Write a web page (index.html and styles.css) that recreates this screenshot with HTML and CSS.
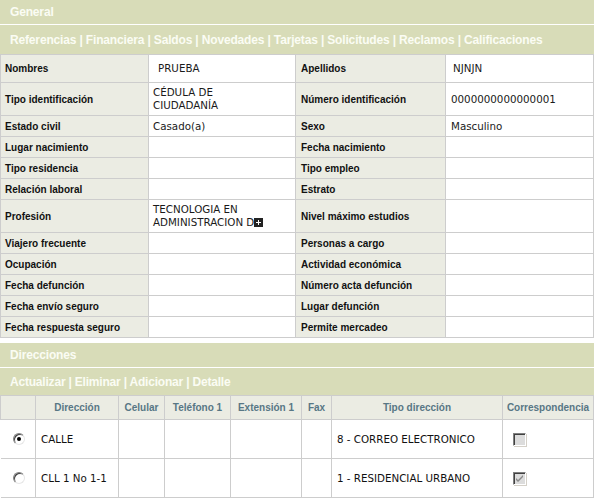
FILE: index.html
```html
<!DOCTYPE html>
<html lang="es">
<head>
<meta charset="utf-8">
<title>General</title>
<link rel="stylesheet" href="styles.css">
</head>
<body>
<div class="page">
  <div class="bar bar-title">General</div>
  <div class="bar bar-links">Referencias | Financiera | Saldos | Novedades | Tarjetas | Solicitudes | Reclamos | Calificaciones</div>
  <table class="info">
    <colgroup><col class="c1"><col class="c2"><col class="c3"><col class="c4"></colgroup>
    <tr class="h28"><td class="lbl">Nombres</td><td class="val pad-x">PRUEBA</td><td class="lbl">Apellidos</td><td class="val pad-y">NJNJN</td></tr>
    <tr class="h33"><td class="lbl">Tipo identificación</td><td class="val">CÉDULA DE<br>CIUDADANÍA</td><td class="lbl">Número identificación</td><td class="val">0000000000000001</td></tr>
    <tr class="h21"><td class="lbl">Estado civil</td><td class="val">Casado(a)</td><td class="lbl">Sexo</td><td class="val">Masculino</td></tr>
    <tr class="h21"><td class="lbl">Lugar nacimiento</td><td class="val"></td><td class="lbl">Fecha nacimiento</td><td class="val"></td></tr>
    <tr class="h21"><td class="lbl">Tipo residencia</td><td class="val"></td><td class="lbl">Tipo empleo</td><td class="val"></td></tr>
    <tr class="h21"><td class="lbl">Relación laboral</td><td class="val"></td><td class="lbl">Estrato</td><td class="val"></td></tr>
    <tr class="h33"><td class="lbl">Profesión</td><td class="val">TECNOLOGIA EN<br>ADMINISTRACION D<span class="plus"><svg width="9" height="9" viewBox="0 0 9 9"><rect width="9" height="9" fill="#222"/><path d="M4 2h1v2h2v1H5v2H4V5H2V4h2z" fill="#fff"/></svg></span></td><td class="lbl">Nivel máximo estudios</td><td class="val"></td></tr>
    <tr class="h21"><td class="lbl">Viajero frecuente</td><td class="val"></td><td class="lbl">Personas a cargo</td><td class="val"></td></tr>
    <tr class="h21"><td class="lbl">Ocupación</td><td class="val"></td><td class="lbl">Actividad económica</td><td class="val"></td></tr>
    <tr class="h21"><td class="lbl">Fecha defunción</td><td class="val"></td><td class="lbl">Número acta defunción</td><td class="val"></td></tr>
    <tr class="h21"><td class="lbl">Fecha envío seguro</td><td class="val"></td><td class="lbl">Lugar defunción</td><td class="val"></td></tr>
    <tr class="h21"><td class="lbl">Fecha respuesta seguro</td><td class="val"></td><td class="lbl">Permite mercadeo</td><td class="val"></td></tr>
  </table>

  <div class="bar bar-title section">Direcciones</div>
  <div class="bar bar-actions">Actualizar | Eliminar | Adicionar | Detalle</div>
  <table class="dirs">
    <colgroup><col class="d1"><col class="d2"><col class="d3"><col class="d4"><col class="d5"><col class="d6"><col class="d7"><col class="d8"></colgroup>
    <tr class="head"><th></th><th>Dirección</th><th>Celular</th><th>Teléfono 1</th><th>Extensión 1</th><th>Fax</th><th>Tipo dirección</th><th>Correspondencia</th></tr>
    <tr class="row">
      <td class="sel"><span class="radio checked"></span></td>
      <td>CALLE</td><td></td><td></td><td></td><td></td>
      <td>8 - CORREO ELECTRONICO</td>
      <td class="chk"><span class="box"></span></td>
    </tr>
    <tr class="row">
      <td class="sel"><span class="radio"></span></td>
      <td>CLL 1 No 1-1</td><td></td><td></td><td></td><td></td>
      <td>1 - RESIDENCIAL URBANO</td>
      <td class="chk"><span class="box checked"><svg width="9" height="9" viewBox="0 0 9 9"><path d="M1 4l2 2 5-5v2L3 8 1 6z" fill="#8a8a8a"/></svg></span></td>
    </tr>
  </table>
</div>
</body>
</html>
```

FILE: styles.css
```css
html, body {
  margin: 0;
  padding: 0;
  background: #ffffff;
}

.page {
  width: 594px;
}

.bar {
  background: #d8dcb8;
  color: #fbfcf4;
  font-family: "Liberation Sans", Arial, sans-serif;
  font-weight: bold;
  font-size: 12px;
  letter-spacing: -0.16px;
  padding-left: 10px;
  display: flex;
  align-items: center;
}

.bar-title {
  height: 24px;
  margin-bottom: 1px;
}

.bar-links {
  height: 29px;
}

.bar-actions {
  height: 27px;
  letter-spacing: -0.2px;
}

.section {
  margin-top: 5px;
}

table {
  border-collapse: collapse;
  table-layout: fixed;
  width: 593px;
}

.info td {
  border: 1px solid #cdcdcd;
  padding: 0 4px;
  vertical-align: middle;
  line-height: 13px;
}

.c1 { width: 148px; }
.c2 { width: 147px; }
.c3 { width: 150px; }
.c4 { width: 148px; }

.h28 td { height: 27px; }
.h33 td { height: 32px; }
.h21 td { height: 20px; }

.lbl {
  background: #ebece3;
  font-family: "Liberation Sans", Arial, sans-serif;
  font-weight: bold;
  font-size: 10px;
  color: #111111;
}

.info .lbl:nth-child(3) {
  padding-left: 5px;
}

.val {
  background: #ffffff;
  font-family: "DejaVu Sans", Verdana, sans-serif;
  font-size: 10.3px;
  color: #1a1a1a;
}

.info .val.pad-x { padding-left: 9px; }
.info .val:nth-child(4) { padding-left: 5px; }
.info .val.pad-y { padding-left: 7px; }

.plus {
  display: inline-block;
  vertical-align: -1px;
  line-height: 0;
}

.dirs th, .dirs td {
  border: 1px solid #cdcdcd;
}

.dirs th {
  background: #ebece3;
  color: #587785;
  font-family: "Liberation Sans", Arial, sans-serif;
  font-weight: bold;
  font-size: 10px;
  height: 23px;
  padding: 0;
  text-align: center;
}

.d1 { width: 35px; }
.d2 { width: 83px; }
.d3 { width: 46px; }
.d4 { width: 66px; }
.d5 { width: 71px; }
.d6 { width: 30px; }
.d7 { width: 171px; }
.d8 { width: 91px; }

.dirs .row td {
  height: 38px;
  padding: 0 5px;
  font-family: "DejaVu Sans", Verdana, sans-serif;
  font-size: 10.3px;
  color: #111111;
  vertical-align: middle;
}

.dirs .row td.sel {
  border-right: 1px solid #cdcdcd;
  border-left: none;
  padding: 0 0 0 12px;
}

.radio {
  display: block;
  width: 12px;
  height: 12px;
  box-sizing: border-box;
  border-radius: 50%;
  border: 1px solid;
  border-color: #808080 #e6e6e6 #e6e6e6 #808080;
  background: #ffffff;
  box-shadow: inset 1px 1px 0 #404040;
  position: relative;
}

.radio.checked::after {
  content: "";
  position: absolute;
  left: 3px;
  top: 3px;
  width: 4px;
  height: 4px;
  border-radius: 50%;
  background: #000000;
}

.dirs .row td.chk {
  padding-left: 10px;
}

.box {
  display: flex;
  align-items: center;
  justify-content: center;
  width: 13px;
  height: 13px;
  box-sizing: border-box;
  border: 1px solid;
  border-color: #808080 #ffffff #ffffff #808080;
  background: #dcdcdc;
  box-shadow: inset 1px 1px 0 #404040, 1px 1px 0 #d4d0c8;
}
```
